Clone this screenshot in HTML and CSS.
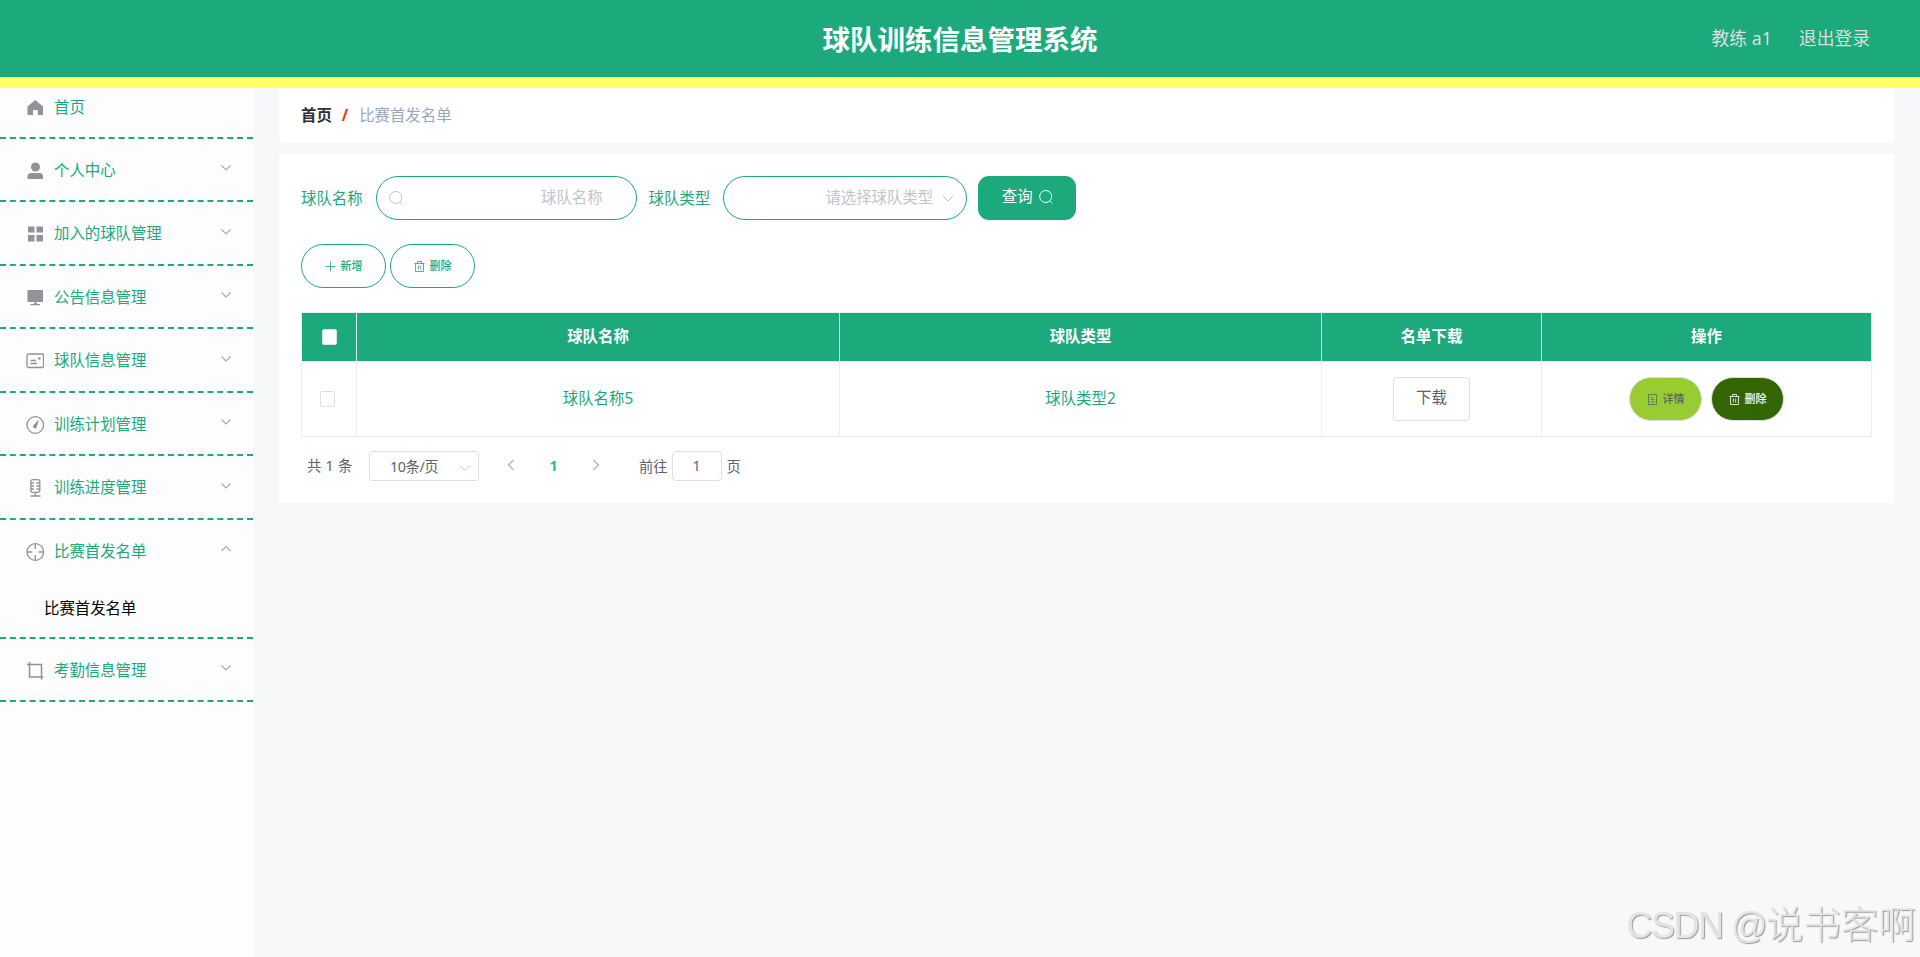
FILE: index.html
```html
<!DOCTYPE html>
<html lang="zh-CN">
<head>
    <meta charset="UTF-8">
    <meta name="viewport" content="width=device-width, initial-scale=1.0">
    <title>球队训练信息管理系统</title>
    <link rel="stylesheet" href="styles.css">
</head>
<body>
    <header class="navbar">
        <h1 class="title">球队训练信息管理系统</h1>
        <div class="right-menu">
            <span class="user-info">教练 a1</span>
            <span class="logout">退出登录</span>
        </div>
    </header>

    <div class="container">
        <aside class="sidebar">
            <ul class="menu">
                <li class="menu-item home">
                    <svg class="icon" viewBox="0 0 18 18"><path fill="currentColor" d="M9.300 1 17 7.500V16h-5.200v-5H7v5H1.500V7.500z"/></svg>
                    <span>首页</span>
                </li>
                <li class="menu-item">
                    <svg class="icon" viewBox="0 0 18 18"><g fill="currentColor"><circle cx="9.500" cy="5" r="4.500"/><path d="M1.500 17v-2.500q0-3.500 3.500-3.500h8.500q3.500 0 3.500 3.500V17z"/></g></svg>
                    <span>个人中心</span>
                    <svg class="arrow" viewBox="0 0 12 8"><path d="M1.500 1.500 6 6l4.500-4.500"/></svg>
                </li>
                <li class="menu-item">
                    <svg class="icon" viewBox="0 0 18 18"><path fill="currentColor" d="M2 1.500h6.500v6H2zM10.500 1.500H17v6h-6.500zM2 10h6.500v6.500H2zM10.500 10H17v6.500h-6.500z"/></svg>
                    <span>加入的球队管理</span>
                    <svg class="arrow" viewBox="0 0 12 8"><path d="M1.500 1.500 6 6l4.500-4.500"/></svg>
                </li>
                <li class="menu-item">
                    <svg class="icon" viewBox="0 0 18 18"><path fill="currentColor" d="M1.500 1H17v12H1.500zM8 13.500h3V15h3v1.300H4.500V15H8z"/></svg>
                    <span>公告信息管理</span>
                    <svg class="arrow" viewBox="0 0 12 8"><path d="M1.500 1.500 6 6l4.500-4.500"/></svg>
                </li>
                <li class="menu-item">
                    <svg class="icon line" viewBox="0 0 18 18"><rect x="1" y="2" width="16.500" height="13.500" rx="1.500"/><path d="M4.500 8.500h5.500M4.500 11.500h6.500"/><path d="M12 6.500h2.500" stroke-width="2"/></svg>
                    <span>球队信息管理</span>
                    <svg class="arrow" viewBox="0 0 12 8"><path d="M1.500 1.500 6 6l4.500-4.500"/></svg>
                </li>
                <li class="menu-item">
                    <svg class="icon line" viewBox="0 0 18 18"><circle cx="9.300" cy="9" r="8.300"/><path d="M12.800 3.500 7.500 9.300a1.900 1.900 0 1 0 3.400 1.400z" fill="currentColor" stroke="none"/></svg>
                    <span>训练计划管理</span>
                    <svg class="arrow" viewBox="0 0 12 8"><path d="M1.500 1.500 6 6l4.500-4.500"/></svg>
                </li>
                <li class="menu-item">
                    <svg class="icon line" viewBox="0 0 18 18"><rect x="4.800" y=".7" width="9" height="12.600" rx="2"/><path d="M5 4h3M10.500 4h3M5 7h3M10.500 7h3M5 10h3M10.500 10h3M9.300 13.500v3M4.500 17h10"/></svg>
                    <span>训练进度管理</span>
                    <svg class="arrow" viewBox="0 0 12 8"><path d="M1.500 1.500 6 6l4.500-4.500"/></svg>
                </li>
                <li class="menu-item opened">
                    <svg class="icon line" viewBox="0 0 18 18"><circle cx="9.300" cy="9" r="8.300"/><path d="M9.300 1v5M9.300 12v5M1 9h5.200M12.500 9h5"/></svg>
                    <span>比赛首发名单</span>
                    <svg class="arrow" viewBox="0 0 12 8"><path d="M1.500 6 6 1.500 10.500 6"/></svg>
                </li>
                <li class="submenu-item">比赛首发名单</li>
                <li class="menu-item">
                    <svg class="icon line" viewBox="0 0 18 18"><path d="M1 2.500h14.500V17.500M3.500 0v15H17.500" stroke-width="1.500"/></svg>
                    <span>考勤信息管理</span>
                    <svg class="arrow" viewBox="0 0 12 8"><path d="M1.500 1.500 6 6l4.500-4.500"/></svg>
                </li>
            </ul>
        </aside>

        <main class="main">
            <nav class="breadcrumb">
                <b>首页</b>
                <i>/</i>
                <span>比赛首发名单</span>
            </nav>

            <section class="content">
                <div class="search-form">
                    <label>球队名称</label>
                    <div class="input name-input">
                        <svg class="search-icon" viewBox="0 0 14 14"><circle cx="6.700" cy="6.500" r="6"/><path d="m11 11 2.500 2.500"/></svg>
                        <span>球队名称</span>
                    </div>
                    <label>球队类型</label>
                    <div class="input type-select">
                        <span>请选择球队类型</span>
                        <svg class="select-arrow" viewBox="0 0 12 8"><path d="M.5 1.500 6 7l5.500-5.500"/></svg>
                    </div>
                    <button class="query-btn">查询
                        <svg class="search-icon" viewBox="0 0 14 14"><circle cx="6.700" cy="6.500" r="6"/><path d="m11 11 2.500 2.500"/></svg>
                    </button>
                </div>

                <div class="actions">
                    <button class="pill">
                        <svg viewBox="0 0 11 11"><path d="M5.500.5v10M.5 5.500h10"/></svg>新增
                    </button>
                    <button class="pill">
                        <svg viewBox="0 0 11 11"><path d="M.5 2.500h10M3.500 2.500v-2h4v2M1.500 2.500v8h8v-8M4.300 4.500v4M6.700 4.500v4"/></svg>删除
                    </button>
                </div>

                <table class="table">
                    <colgroup>
                        <col class="col-check">
                        <col class="col-name">
                        <col class="col-type">
                        <col class="col-file">
                        <col>
                    </colgroup>
                    <thead>
                        <tr>
                            <th><span class="checkbox"></span></th>
                            <th>球队名称</th>
                            <th>球队类型</th>
                            <th>名单下载</th>
                            <th>操作</th>
                        </tr>
                    </thead>
                    <tbody>
                        <tr>
                            <td><span class="checkbox"></span></td>
                            <td>球队名称5</td>
                            <td>球队类型2</td>
                            <td><button class="download-btn">下载</button></td>
                            <td>
                                <div class="ops">
                                    <button class="pill detail-btn">
                                        <svg viewBox="0 0 11 11"><path d="M1.500.5h8v10h-8zM3.500 3.500h2M3.500 5.500h4M3.500 7.800h4"/></svg>详情
                                    </button>
                                    <button class="pill delete-btn">
                                        <svg viewBox="0 0 11 11"><path d="M.5 2.500h10M3.500 2.500v-2h4v2M1.500 2.500v8h8v-8M4.300 4.500v4M6.700 4.500v4"/></svg>删除
                                    </button>
                                </div>
                            </td>
                        </tr>
                    </tbody>
                </table>

                <div class="pagination">
                    <span class="total">共 1 条</span>
                    <div class="page-size">
                        <span>10条/页</span>
                        <svg viewBox="0 0 12 8"><path d="M1 1.500 6 6.500l5-5"/></svg>
                    </div>
                    <svg class="pager-arrow" viewBox="0 0 8 12"><path d="M6.500 1 1.500 6l5 5"/></svg>
                    <span class="current">1</span>
                    <svg class="pager-arrow" viewBox="0 0 8 12"><path d="m1.500 1 5 5-5 5"/></svg>
                    <span class="jump">前往</span>
                    <div class="page-input">1</div>
                    <span class="jump-end">页</span>
                </div>
            </section>
        </main>
    </div>

    <div class="watermark"><span>CSDN @</span>说书客啊</div>
</body>
</html>
```

FILE: styles.css
```css
* {
    box-sizing: border-box;
}

body {
    margin: 0;
    height: 957px;
    overflow: hidden;
    background: #f6f8fa;
    color: #1ca97b;
    font-family: "Noto Sans", "Noto Sans CJK SC", sans-serif;
    font-size: 15.4px;
    line-height: 22px;
}

svg {
    display: block;
    flex: none;
    fill: none;
    stroke: currentColor;
}

button {
    display: flex;
    align-items: center;
    justify-content: center;
    height: 44px;
    padding: 0;
    font-family: inherit;
    font-size: 15.4px;
    line-height: 22px;
}

/* header */
.navbar {
    display: grid;
    grid-template-columns: 1fr auto 1fr;
    align-items: center;
    height: 88px;
    padding: 0 50px 0 0;
    background: #1ca97b;
    border-bottom: 11px solid #ffff66;
}

.title {
    grid-column: 2;
    margin: 2px -25px 0 25px;
    color: #fff;
    font-size: 27.5px;
    line-height: 40px;
    font-weight: 700;
}

.right-menu {
    display: flex;
    justify-content: flex-end;
    gap: 27px;
    margin-bottom: 2px;
    color: #ddd;
    font-size: 17.8px;
}

.container {
    display: flex;
    height: 869px;
}

/* sidebar */
.sidebar {
    width: 253px;
    background: #fdfdfd;
}

.menu {
    margin: 0;
    padding: 0;
    list-style: none;
}

.menu-item {
    display: flex;
    align-items: center;
    height: 63.5px;
    padding: 2px 21px 0 26px;
    border-bottom: 2px dashed #1ca97b;
}

.menu-item.home {
    height: 50.8px;
    padding-top: 0;
    padding-bottom: 9px;
}

.menu-item.opened {
    height: 61.5px;
    border-bottom: none;
}

.icon {
    width: 18px;
    height: 18px;
    margin-right: 10px;
    color: #909399;
    stroke: none;
}

.icon.line {
    stroke: currentColor;
    stroke-width: 1.3;
}

.arrow {
    width: 12px;
    height: 8px;
    margin: -5px 0 0 auto;
    color: #a6a9ae;
    stroke-width: 1.1;
}

.submenu-item {
    height: 57.5px;
    padding: 17px 0 0 44px;
    border-bottom: 2px dashed #1ca97b;
    color: #000;
}

/* main */
.main {
    flex: 1;
    padding: 0 26px;
}

.breadcrumb {
    display: flex;
    align-items: center;
    height: 55px;
    padding: 0 22px;
    margin-bottom: 11px;
    background: #fff;
    border-radius: 4px;
}

.breadcrumb b {
    color: #303133;
}

.breadcrumb i {
    margin: 0 11px 0 10px;
    color: #ff3300;
    font-style: normal;
    font-weight: 700;
}

.breadcrumb span {
    color: #97a8be;
}

.content {
    height: 349px;
    padding: 22px;
    background: #fff;
}

.search-form {
    display: flex;
    align-items: center;
    height: 44px;
}

.search-form label {
    padding-top: 1px;
}

.input {
    display: flex;
    align-items: center;
    height: 44px;
    border: 1px solid #1ca97b;
    border-radius: 22px;
    color: #c0c4cc;
}

.name-input {
    justify-content: space-between;
    width: 261px;
    margin: 0 12px 0 13px;
    padding: 0 33px 0 12px;
}

.type-select {
    justify-content: flex-end;
    gap: 9px;
    width: 244px;
    margin: 0 11px 0 13px;
    padding-right: 12px;
}

.search-icon {
    width: 14px;
    height: 14px;
}

.select-arrow {
    width: 12px;
    height: 8px;
}

.query-btn {
    gap: 6px;
    width: 98px;
    padding-bottom: 2px;
    border: none;
    border-radius: 11px;
    background: #1ca97b;
    color: #fff;
}

.actions {
    display: flex;
    gap: 4px;
    margin: 24px 0;
}

.pill {
    gap: 5px;
    width: 85px;
    border: 1px solid #1ca97b;
    border-radius: 22px;
    background: #fff;
    color: #1ca97b;
    font-size: 11px;
    font-weight: 500;
}

.pill svg {
    width: 11px;
    height: 11px;
    stroke-width: .8;
}

/* table */
.table {
    width: 1571px;
    table-layout: fixed;
    border-collapse: separate;
    border-spacing: 0;
    border-top: 1px solid #ebeef5;
    border-left: 1px solid #ebeef5;
    text-align: center;
}

.col-check { width: 55px; }
.col-name { width: 483px; }
.col-type { width: 482px; }
.col-file { width: 220px; }

.table th,
.table td {
    padding: 0;
    border-right: 1px solid #ebeef5;
    border-bottom: 1px solid #ebeef5;
}

.table th {
    height: 49px;
    background: #1ca97b;
    color: #fff;
}

.table td {
    height: 75px;
}

.checkbox {
    display: block;
    width: 15px;
    height: 16px;
    margin: 0 auto 0 18px;
    border: 1px solid #dcdfe6;
    border-radius: 2px;
    background: #fff;
}

th .checkbox {
    margin-left: 20px;
}

.download-btn {
    width: 77px;
    margin: 0 auto;
    padding-bottom: 3px;
    border: 1px solid #dcdfe6;
    border-radius: 4px;
    background: #fff;
    color: #606266;
}

.ops {
    display: flex;
    justify-content: center;
    gap: 9px;
}

.detail-btn,
.delete-btn {
    width: 73px;
    border-color: #dcdfe6;
}

.detail-btn {
    background: #99cc33;
    color: #606266;
}

.delete-btn {
    background: #336600;
    color: #fff;
}

/* pagination */
.pagination {
    display: flex;
    align-items: center;
    height: 30px;
    margin-top: 14px;
    padding-left: 6px;
    color: #606266;
    font-size: 14.3px;
}

.total {
    width: 62px;
    word-spacing: .6px;
}

.page-size {
    display: flex;
    align-items: center;
    justify-content: space-between;
    width: 110px;
    height: 30px;
    margin-right: 28px;
    padding: 2px 7px 0 20px;
    border: 1px solid #dcdfe6;
    border-radius: 3px;
    letter-spacing: -.4px;
}

.page-size svg {
    width: 12px;
    height: 8px;
    margin-top: 2px;
    color: #c0c4cc;
}

.pager-arrow {
    width: 8px;
    height: 12px;
    margin-top: -2px;
    color: #b4b8c0;
    stroke-width: 1.5;
}

.current {
    width: 77px;
    color: #13c38f;
    font-weight: 700;
    text-align: center;
}

.jump {
    margin: 2px 4px 0 39px;
}

.page-input {
    width: 50px;
    height: 30px;
    border: 1px solid #dcdfe6;
    border-radius: 4px;
    line-height: 27px;
    text-align: center;
}

.jump-end {
    margin: 2px 0 0 5px;
}

.watermark {
    position: fixed;
    right: 4px;
    bottom: 7px;
    color: #e2e4e5;
    font-family: "Noto Sans CJK SC", sans-serif;
    font-size: 37.5px;
    font-weight: 300;
    line-height: 48px;
    text-shadow: 1px 1px 1px #999;
}

.watermark span {
    font-family: "Liberation Sans", sans-serif;
    font-size: 36px;
    letter-spacing: -1.5px;
}
```
